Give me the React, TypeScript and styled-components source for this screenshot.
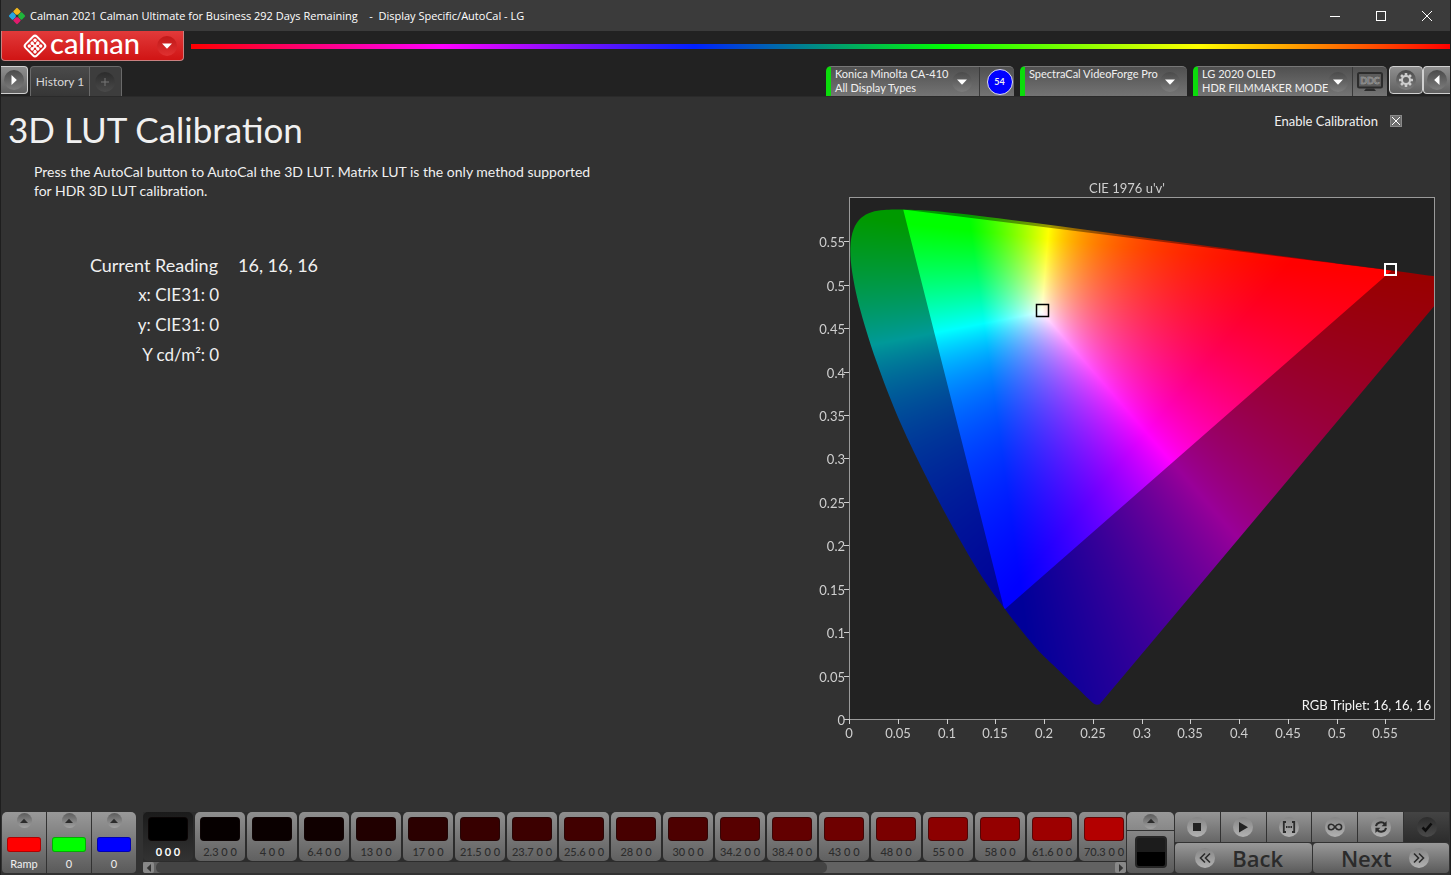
import React, { useLayoutEffect, useRef, useState } from "react";
import styled, { createGlobalStyle, css } from "styled-components";

const GlobalStyle = createGlobalStyle`
  * { box-sizing: border-box; }
  body {
    margin: 0;
    background: #323232;
    color: #f0f0f0;
    font-family: Lato, "Liberation Sans", sans-serif;
    font-size: 13px;
  }
  button {
    margin: 0;
    padding: 0;
    border: 0;
    background: none;
    color: inherit;
    font: inherit;
    cursor: pointer;
  }
  svg { display: block; }
`;

const Shell = styled.div`
  display: flex;
  flex-direction: column;
  min-height: 100vh;
  border-left: 1px solid #1e1e1e;
  border-right: 1px solid #1e1e1e;
`;

/* ---------- window title bar ---------- */

const TitleBar = styled.header`
  display: flex;
  align-items: center;
  height: 31px;
  padding-left: 7px;
  background: #3b3b3b;
  color: #fff;
  font-family: "Open Sans", "Noto Sans", sans-serif;
  font-size: 11px;
`;

const WindowTitle = styled.span`
  margin-left: 4px;
  white-space: pre;
`;

const WindowButtons = styled.div`
  display: flex;
  margin-left: auto;
`;

const WindowButton = styled.button`
  display: grid;
  place-items: center;
  width: 46px;
  height: 31px;
`;

/* ---------- brand row ---------- */

const Header = styled.div`
  background: #222;
`;

const BrandRow = styled.div`
  display: flex;
  align-items: center;
  height: 30px;
  gap: 7px;
`;

const BrandButton = styled.button`
  display: flex;
  align-items: center;
  width: 183px;
  height: 30px;
  padding: 0 6px 0 20px;
  border: 1px solid #c98080;
  border-top: 0;
  border-radius: 0 0 4px 4px;
  background: linear-gradient(#e23a3a, #d01414);
  color: #fff;
`;

const BrandName = styled.span`
  margin-left: 2px;
  font-size: 29px;
  font-weight: 500;
  line-height: 24px;
  flex: 1;
  text-align: left;
  height: 30px;
`;

const Rainbow = styled.div`
  flex: 1;
  height: 5px;
  background: linear-gradient(
    90deg,
    #f00,
    #f0f 20%,
    #0020ff 40%,
    #0f0 60%,
    #ff0 80%,
    #f00
  );
`;

/* ---------- tabs and devices ---------- */

const TabRow = styled.div`
  display: flex;
  align-items: flex-end;
  height: 36px;
  border-bottom: 1px solid #2a2a2a;
`;

type Tone = "dark" | "mid" | "light" | "red" | "dim";
const toneFill: Record<Tone, string> = {
  dark: "linear-gradient(#4a4a4a, #7c7c7c)",
  mid: "linear-gradient(#5c5c5c, #a2a2a2)",
  light: "linear-gradient(#858585, #b2b2b2)",
  red: "linear-gradient(#c01818, #e03030)",
  dim: "linear-gradient(#2c2c2c, #4a4a4a)",
};

const RoundIcon = styled.span<{ $size?: number; $tone?: Tone }>`
  display: grid;
  place-items: center;
  flex: none;
  width: ${(p) => p.$size ?? 20}px;
  height: ${(p) => p.$size ?? 20}px;
  border-radius: 50%;
  color: ${(p) => (p.$tone === "light" || p.$tone === "mid" ? "#2b2b2b" : "#fff")};
  background: ${(p) => toneFill[p.$tone ?? "dark"]};
`;

const EdgeButton = styled.button<{ $side?: "left" | "right"; $wide?: boolean }>`
  display: grid;
  place-items: center;
  width: ${(p) => (p.$wide ? 34 : 27)}px;
  height: 28px;
  border: 1px solid #d0d0d0;
  background: linear-gradient(#8f8f8f, #606060);
  border-radius: 4px;
  align-self: flex-end;
  margin-bottom: 2px;
  ${(p) =>
    p.$side === "left" &&
    css`
      border-left: 0;
      border-radius: 0 4px 4px 0;
    `}
  ${(p) =>
    p.$side === "right" &&
    css`
      border-right: 0;
      border-radius: 4px 0 0 4px;
    `}
`;

const HistoryTabs = styled.div`
  display: flex;
  height: 30px;
  margin-left: 2px;
  border: 1px solid #6a6a6a;
  border-bottom: 0;
  border-radius: 4px 4px 0 0;
  background: linear-gradient(#4a4a4a, #363636);
`;

const HistoryTab = styled.button`
  width: 58px;
  color: #d8d8d8;
  font-size: 12px;
`;

const AddTab = styled.button`
  display: grid;
  place-items: center;
  width: 32px;
  padding-right: 2px;
  border-left: 1px solid #6a6a6a;
  background: #3d3d3d;
  border-radius: 0 3px 0 0;
`;

const Devices = styled.div`
  display: flex;
  align-items: flex-end;
  gap: 6px;
  margin-left: auto;
  margin-right: 2px;
`;

const Device = styled.div`
  display: flex;
  height: 30px;
  border-top: 1px solid #777;
  border-left: 5px solid #0bdc0b;
  border-radius: 5px 5px 0 0;
  background: linear-gradient(#505050, #747474);
`;

const DevicePicker = styled.button<{ $width: number }>`
  display: flex;
  align-items: center;
  justify-content: space-between;
  width: ${(p) => p.$width}px;
  padding: 0 7px 0 4px;
  text-align: left;
  font-size: 11px;
  line-height: 14px;
  white-space: nowrap;
`;

const DeviceText = styled.span`
  align-self: flex-start;
`;

const DeviceExtra = styled.div<{ $badge?: boolean }>`
  display: grid;
  place-items: center;
  width: 35px;
  padding-left: ${(p) => (p.$badge ? 5 : 0)}px;
  border-left: 1px solid #3a3a3a;
`;

const Badge = styled.span`
  display: grid;
  place-items: center;
  width: 26px;
  height: 26px;
  border: 1px solid #dde;
  border-radius: 50%;
  background: #00f;
  font-size: 9px;
  font-weight: 700;
`;

/* ---------- page ---------- */

const Main = styled.main`
  flex: 1;
  display: grid;
  grid-template-columns: minmax(0, 1fr) minmax(0, 628px);
  padding: 0 12px 0 7px;
  background: #323232;
`;

const Title = styled.h1`
  margin: 0;
  padding-top: 10px;
  font-size: 35px;
  font-weight: 400;
  line-height: 44px;
`;

const Intro = styled.p`
  max-width: 568px;
  margin: 11px 0 0 26px;
  font-size: 14px;
  line-height: 19px;
`;

const Readings = styled.dl`
  margin: 50px 0 0;
  line-height: 30px;
`;

const Reading = styled.div<{ $joined?: boolean }>`
  display: flex;
  gap: ${(p) => (p.$joined ? 4 : 20)}px;
  font-size: ${(p) => (p.$joined ? 17 : 18)}px;
  width: ${(p) => (p.$joined ? "211px" : "auto")};
  justify-content: ${(p) => (p.$joined ? "flex-end" : "flex-start")};
  dt {
    text-align: right;
    width: ${(p) => (p.$joined ? "auto" : "210px")};
  }
  dd {
    margin: 0;
  }
`;

const ChartColumn = styled.section`
  display: flex;
  flex-direction: column;
`;

const EnableRow = styled.label`
  display: flex;
  align-items: center;
  align-self: flex-end;
  gap: 12px;
  height: 20px;
  margin: 14px 36px 0 0;
`;

const CheckBox = styled.input`
  appearance: none;
  width: 12px;
  height: 12px;
  margin: 0;
  border: 1px solid #8a8a8a;
  background: #6e6e6e;
  &:checked {
    background:
      linear-gradient(45deg, transparent 44%, #fff 44% 56%, transparent 56%) center / 8px 8px no-repeat,
      linear-gradient(-45deg, transparent 44%, #fff 44% 56%, transparent 56%) center / 8px 8px no-repeat,
      #6e6e6e;
  }
`;

const ChartStack = styled.div`
  display: grid;
  margin-top: 47px;
  > * {
    grid-area: 1 / 1;
    width: 100%;
    height: auto;
  }
`;

const AxisText = styled.text<{ $bright?: boolean }>`
  font-size: 13px;
  fill: ${(p) => (p.$bright ? "#f4f4f4" : "#cfcfcf")};
`;

/* ---------- footer ---------- */

const Footer = styled.footer`
  display: flex;
  height: 64px;
  padding: 1px 1px 2px;
`;

const panel = css`
  background: linear-gradient(#999, #5a5a5a);
`;

const RampGroup = styled.div`
  display: flex;
  gap: 1px;
  border-radius: 5px 5px 4px 4px;
  overflow: hidden;
  margin-right: 7px;
`;

const RampButton = styled.button`
  ${panel}
  display: flex;
  flex-direction: column;
  align-items: center;
  justify-content: space-between;
  width: 44px;
  padding: 1px 0 2px;
  font-size: 11px;
  line-height: 14px;
`;

const RampColor = styled.span<{ $color: string }>`
  width: 34px;
  height: 15px;
  margin-top: 7px;
  margin-bottom: 3px;
  border-radius: 3px;
  background: ${(p) => p.$color};
  box-shadow: inset 0 0 0 1px rgba(0, 0, 0, 0.3);
`;

const Patches = styled.div`
  display: flex;
  flex-direction: column;
  flex: 1;
  min-width: 0;
  background: #2c2c2c;
`;

const PatchList = styled.div`
  display: flex;
  gap: 2px;
  flex: 1;
  overflow: hidden;
`;

const Patch = styled.button<{ $selected: boolean }>`
  display: flex;
  flex-direction: column;
  align-items: center;
  flex: none;
  width: 50px;
  height: 49px;
  padding-top: 5px;
  border-radius: 5px;
  background: ${(p) =>
    p.$selected ? "linear-gradient(#1a1a1a, #333)" : "linear-gradient(#8f8f8f, #606060)"};
  color: ${(p) => (p.$selected ? "#fff" : "#2c2c2c")};
  font-size: 11px;
  font-weight: ${(p) => (p.$selected ? 700 : 500)};
  line-height: 14px;
  white-space: nowrap;
`;

const PatchColor = styled.span<{ $level: number }>`
  width: 40px;
  height: 24px;
  margin-bottom: 4px;
  border-radius: 4px;
  border: 1px solid rgba(20, 10, 10, 0.5);
  background: rgb(${(p) => Math.round(p.$level * 2.55)}, 0, 0);
`;

const ScrollBar = styled.div`
  display: flex;
  height: 11px;
  background: #626262;
  border-radius: 0 0 3px 3px;
`;

const ScrollArrow = styled.button`
  display: grid;
  place-items: center;
  width: 11px;
  height: 11px;
  background: #888;
  color: #333;
  border-radius: 2px;
`;

const ScrollTrack = styled.div`
  flex: 1;
  padding: 0 0 0 2px;
`;

const ScrollThumb = styled.div`
  width: 70%;
  height: 11px;
  border-radius: 5px;
  background: #444;
`;

const PreviewPanel = styled.div`
  display: flex;
  flex-direction: column;
  gap: 1px;
  width: 47px;
  margin: 0 1px;
  border-radius: 5px 5px 4px 4px;
  overflow: hidden;
`;

const PreviewToggle = styled.button`
  display: grid;
  place-items: center;
  height: 18px;
  background: linear-gradient(#999, #888);
`;

const PreviewSlot = styled.div`
  display: grid;
  place-items: center;
  flex: 1;
  background: linear-gradient(#868686, #5a5a5a);
`;

const PreviewColor = styled.span`
  width: 32px;
  height: 32px;
  border: 2px solid #262626;
  border-radius: 4px;
  background: linear-gradient(#1c1c1c 50%, #000 50%);
`;

const Controls = styled.div`
  display: flex;
  flex-direction: column;
  gap: 1px;
  width: 274px;
`;

const ControlRow = styled.div`
  display: flex;
  gap: 1px;
  height: 30px;
`;

const ControlButton = styled.button<{ $dim?: boolean }>`
  display: grid;
  place-items: center;
  flex: 1;
  background: ${(p) =>
    p.$dim ? "linear-gradient(#444, #2c2c2c)" : "linear-gradient(#969696, #666)"};
  &:first-child {
    border-top-left-radius: 4px;
  }
`;

const NavButton = styled.button<{ $back?: boolean }>`
  ${panel}
  display: flex;
  align-items: center;
  justify-content: center;
  gap: 17px;
  flex: 1;
  padding: ${(p) => (p.$back ? "0 8px 0 0" : "0 0 0 8px")};
  border-radius: 4px;
  color: #2b2b2b;
  font-family: "Open Sans", "Noto Sans", sans-serif;
  font-size: 22px;
  font-weight: 600;
  line-height: 30px;
`;

/* ---------- icons ---------- */

const AppIcon = () => (
  <svg width="18" height="18" viewBox="0 0 18 18" aria-hidden="true">
    <g transform="rotate(45 9 9)">
      <rect x="3" y="3" width="5.8" height="5.8" rx="1" fill="#f2b91c" />
      <rect x="9.2" y="3" width="5.8" height="5.8" rx="1" fill="#1fb53a" />
      <rect x="3" y="9.2" width="5.8" height="5.8" rx="1" fill="#27a5e0" />
      <rect x="9.2" y="9.2" width="5.8" height="5.8" rx="1" fill="#e31b6d" />
      <circle cx="9" cy="9" r="1.4" fill="#333" />
    </g>
  </svg>
);

const BrandMark = () => (
  <svg width="26" height="26" viewBox="0 0 26 26" aria-hidden="true">
    <g transform="rotate(45 13 13)" fill="#fff">
      <rect x="5" y="5" width="16" height="16" rx="2.6" fill="none" stroke="#fff" strokeWidth="2" />
      {[9, 13, 17].map((x) =>
        [9, 13, 17].map((y) => <circle key={`${x}-${y}`} cx={x} cy={y} r="1.75" />),
      )}
      <path d="M13 9v8M9 13h8" stroke="#fff" strokeWidth="1" />
    </g>
  </svg>
);

type ArrowProps = { dir: "up" | "down" | "left" | "right"; size?: number };
const arrowAngle = { down: 0, left: 90, up: 180, right: 270 };
const Arrow = ({ dir, size = 10 }: ArrowProps) => (
  <svg width={size} height={size} viewBox="0 0 10 10" aria-hidden="true">
    <path d="M0 2.5h10L5 7.8z" fill="currentColor" transform={`rotate(${arrowAngle[dir]} 5 5)`} />
  </svg>
);

const GearIcon = () => (
  <svg width="16" height="16" viewBox="0 0 16 16" aria-hidden="true">
    <g fill="#ccc">
      {[0, 45, 90, 135, 180, 225, 270, 315].map((a) => (
        <rect key={a} x="6.7" y="1" width="2.6" height="3.4" rx=".6" transform={`rotate(${a} 8 8)`} />
      ))}
    </g>
    <circle cx="8" cy="8" r="4" fill="none" stroke="#ccc" strokeWidth="2" />
  </svg>
);

const DdcIcon = () => (
  <svg width="26" height="20" viewBox="0 0 26 20" role="img" aria-label="DDC">
    <rect x="1" y="1" width="24" height="14.5" rx="1.5" fill="#5c5c5c" stroke="#2c2c2c" strokeWidth="2" />
    <path d="M9 16.5h8l2 2.500H7z" fill="#2c2c2c" />
    <text
      x="13"
      y="11.5"
      textAnchor="middle"
      fontSize="9"
      fontWeight="700"
      fill="#666"
      stroke="#a8a8a8"
      strokeWidth=".5"
    >
      DDC
    </text>
  </svg>
);

const icon = { width: 16, height: 16, viewBox: "0 0 16 16", "aria-hidden": true } as const;
const line = {
  fill: "none",
  stroke: "#2b2b2b",
  strokeWidth: 1.6,
} as const;

const StopIcon = () => (
  <svg {...icon}><rect x="4" y="4" width="8" height="8" fill="#222" /></svg>
);
const PlayIcon = () => (
  <svg {...icon}><path d="M4 3l9 5.3-9 5.200z" fill="#222" /></svg>
);
const RangeIcon = () => (
  <svg {...icon}>
    <path d="M5 3H2.800v10H5M11 3h2.200v10H11" {...line} strokeWidth={1.8} />
    <path d="M5 8h1.500M7.250 8h1.500M9.500 8H11" {...line} strokeWidth={1.8} />
  </svg>
);
const LoopIcon = () => (
  <svg {...icon}>
    <path
      d="M8 8C6.500 5.800 5.400 5.200 4.200 5.200a2.800 2.800 0 0 0 0 5.600C5.400 10.800 6.500 10.200 8 8s2.600-2.800 3.800-2.800a2.800 2.800 0 0 1 0 5.600C10.600 10.800 9.500 10.200 8 8z"
      {...line}
    />
  </svg>
);
const RefreshIcon = () => (
  <svg {...icon}>
    <path d="M3 7.200A5 4.600 0 0 1 11.800 5M13 8.800A5 4.600 0 0 1 4.200 11" {...line} strokeWidth={2} />
    <path d="M13.600 2v5.200H8.600zM2.400 14V8.800h5z" fill="#2b2b2b" />
  </svg>
);
const CheckIcon = () => (
  <svg {...icon}><path d="M3.500 8.500l3 3 6-7" {...line} stroke="#0d0d0d" strokeWidth={2.6} /></svg>
);
const DoubleChevron = ({ back }: { back?: boolean }) => (
  <svg {...icon}>
    <path
      d="M3 3.500L7.500 8 3 12.500M8 3.500L12.500 8 8 12.500"
      {...line}
      transform={back ? "rotate(180 8 8)" : undefined}
    />
  </svg>
);

/* ---------- CIE 1976 u'v' chart ---------- */

const CHART = { width: 628, height: 566 };
const PLOT = { left: 39, top: 20, width: 585, height: 521, max: 0.6 };

const toX = (u: number) => PLOT.left + (u / PLOT.max) * PLOT.width;
const toY = (v: number) => PLOT.top + PLOT.height - (v / PLOT.max) * PLOT.height;

// CIE 1931 2-degree spectral locus as x, y pairs from 380 to 700 nm
const LOCUS_XY: [number, number][] = [
  [0.1741, 0.005], [0.1714, 0.0051], [0.1689, 0.0069], [0.1644, 0.0109], [0.1566, 0.0177],
  [0.144, 0.0297], [0.1241, 0.0578], [0.1096, 0.0868], [0.0913, 0.1327], [0.0687, 0.2007],
  [0.0454, 0.295], [0.0235, 0.4127], [0.0082, 0.5384], [0.0039, 0.6548], [0.0139, 0.7502],
  [0.0389, 0.812], [0.0743, 0.8338], [0.1142, 0.8262], [0.1547, 0.8059], [0.2296, 0.7543],
  [0.3016, 0.6923], [0.3731, 0.6245], [0.4441, 0.5547], [0.5125, 0.4866], [0.5752, 0.4242],
  [0.627, 0.3725], [0.6658, 0.334], [0.6915, 0.3083], [0.719, 0.2809], [0.7347, 0.2653],
];

const locus = LOCUS_XY.map(([x, y]) => {
  const d = -2 * x + 12 * y + 3;
  return [toX((4 * x) / d), toY((9 * y) / d)];
});

// BT.2020 primaries
const GAMUT = [
  [0.5566, 0.5165],
  [0.0556, 0.5868],
  [0.1593, 0.1258],
].map(([u, v]) => [toX(u), toY(v)]);

function colorAt(u: number, v: number): [number, number, number] {
  const d = 6 * u - 16 * v + 12;
  const x = (9 * u) / d;
  const y = Math.max((4 * v) / d, 0.0001);
  const X = x / y;
  const Z = (1 - x - y) / y;
  const r = Math.max(0, 3.2406 * X - 1.5372 - 0.4986 * Z);
  const g = Math.max(0, -0.9689 * X + 1.8758 + 0.0415 * Z);
  const b = Math.max(0, 0.0557 * X - 0.204 + 1.057 * Z);
  const m = Math.max(r, g, b) || 1;
  return [(r / m) * 255, (g / m) * 255, (b / m) * 255];
}

function drawGamut(ctx: CanvasRenderingContext2D) {
  const { width, height } = CHART;
  const image = ctx.createImageData(width, height);
  for (let py = PLOT.top; py < PLOT.top + PLOT.height; py++) {
    for (let px = PLOT.left; px < PLOT.left + PLOT.width; px++) {
      const u = ((px + 0.5 - PLOT.left) / PLOT.width) * PLOT.max;
      const v = ((PLOT.top + PLOT.height - py - 0.5) / PLOT.height) * PLOT.max;
      const i = (py * width + px) * 4;
      const [r, g, b] = colorAt(u, v);
      image.data[i] = r;
      image.data[i + 1] = g;
      image.data[i + 2] = b;
      image.data[i + 3] = 255;
    }
  }
  ctx.putImageData(image, 0, 0);

  // keep only what lies inside the spectral locus
  ctx.globalCompositeOperation = "destination-in";
  ctx.beginPath();
  ctx.moveTo(locus[0][0], locus[0][1]);
  for (let i = 0; i < locus.length - 1; i++) {
    const p0 = locus[Math.max(i - 1, 0)];
    const p1 = locus[i];
    const p2 = locus[i + 1];
    const p3 = locus[Math.min(i + 2, locus.length - 1)];
    ctx.bezierCurveTo(
      p1[0] + (p2[0] - p0[0]) / 6,
      p1[1] + (p2[1] - p0[1]) / 6,
      p2[0] - (p3[0] - p1[0]) / 6,
      p2[1] - (p3[1] - p1[1]) / 6,
      p2[0],
      p2[1],
    );
  }
  ctx.closePath();
  ctx.fill();

  // darken the area outside the gamut triangle
  ctx.globalCompositeOperation = "source-atop";
  ctx.fillStyle = "rgba(0, 0, 0, 0.4)";
  ctx.beginPath();
  ctx.rect(0, 0, width, height);
  GAMUT.forEach(([x, y], i) => (i ? ctx.lineTo(x, y) : ctx.moveTo(x, y)));
  ctx.closePath();
  ctx.fill("evenodd");

  ctx.globalCompositeOperation = "destination-over";
  ctx.fillStyle = "#222";
  ctx.fillRect(PLOT.left, PLOT.top, PLOT.width, PLOT.height);
  ctx.globalCompositeOperation = "source-over";
}

const ticks = Array.from({ length: 12 }, (_, i) => i * 0.05);
const label = (t: number) => String(Number(t.toFixed(2)));

function CieChart() {
  const ref = useRef<HTMLCanvasElement>(null);
  useLayoutEffect(() => {
    const ctx = ref.current?.getContext("2d");
    if (ctx) drawGamut(ctx);
  }, []);
  return (
    <ChartStack>
      <canvas ref={ref} width={CHART.width} height={CHART.height} />
      <svg viewBox={`0 0 ${CHART.width} ${CHART.height}`} role="img" aria-label="CIE 1976 chart">
        <AxisText x="317" y="15" textAnchor="middle">CIE 1976 u'v'</AxisText>
        <rect
          x={PLOT.left + 0.5}
          y={PLOT.top - 0.5}
          width={PLOT.width}
          height={PLOT.height + 1}
          fill="none"
          stroke="#9a9a9a"
        />
        {ticks.map((t) => (
          <g key={t}>
            <path
              d={`M${PLOT.left - 5} ${Math.round(toY(t)) + 0.5}h5M${Math.round(toX(t)) + 0.5} ${PLOT.top + PLOT.height}v5`}
              stroke="#cfcfcf"
            />
            <AxisText x={PLOT.left - 4} y={Math.round(toY(t)) + 6} textAnchor="end">{label(t)}</AxisText>
            <AxisText x={Math.round(toX(t))} y={CHART.height - 6} textAnchor="middle">{label(t)}</AxisText>
          </g>
        ))}
        <rect x="226.500" y="126.500" width="12" height="12" fill="none" stroke="#000" strokeWidth="1.500" />
        <rect x="575" y="86" width="11" height="11" fill="none" stroke="#fff" strokeWidth="2" />
        <AxisText x="621" y="532" textAnchor="end" $bright>RGB Triplet: 16, 16, 16</AxisText>
      </svg>
    </ChartStack>
  );
}

/* ---------- app ---------- */

const RAMPS = [
  { name: "Ramp", color: "#f00" },
  { name: "0", color: "#0f0" },
  { name: "0", color: "#00f" },
];

const LEVELS = [
  0, 2.3, 4, 6.4, 13, 17, 21.5, 23.7, 25.6, 28, 30, 34.2, 38.4, 43, 48, 55, 58, 61.6, 70.3,
];

export default function App() {
  const [enabled, setEnabled] = useState(true);
  const [selected, setSelected] = useState(0);
  return (
    <Shell>
      <GlobalStyle />
      <TitleBar>
        <AppIcon />
        <WindowTitle>
          {"Calman 2021 Calman Ultimate for Business 292 Days Remaining    -  Display Specific/AutoCal - LG"}
        </WindowTitle>
        <WindowButtons>
          <WindowButton aria-label="Minimize">
            <svg width="10" height="10" aria-hidden="true"><path d="M0 5.500h10" stroke="#fff" /></svg>
          </WindowButton>
          <WindowButton aria-label="Maximize">
            <svg width="10" height="10" aria-hidden="true">
              <rect x=".5" y=".5" width="9" height="9" fill="none" stroke="#fff" />
            </svg>
          </WindowButton>
          <WindowButton aria-label="Close">
            <svg width="10" height="10" aria-hidden="true"><path d="M0 0l10 10M10 0L0 10" stroke="#fff" /></svg>
          </WindowButton>
        </WindowButtons>
      </TitleBar>

      <Header>
        <BrandRow>
          <BrandButton aria-haspopup="menu">
            <BrandMark />
            <BrandName>calman</BrandName>
            <RoundIcon $tone="red"><Arrow dir="down" /></RoundIcon>
          </BrandButton>
          <Rainbow />
        </BrandRow>
        <TabRow>
          <EdgeButton $side="left" aria-label="Show panel">
            <RoundIcon><Arrow dir="right" /></RoundIcon>
          </EdgeButton>
          <HistoryTabs>
            <HistoryTab>History 1</HistoryTab>
            <AddTab aria-label="Add tab">
              <RoundIcon $tone="dim">
                <svg width="8" height="8" aria-hidden="true"><path d="M4 0v8M0 4h8" stroke="#777" /></svg>
              </RoundIcon>
            </AddTab>
          </HistoryTabs>
          <Devices>
            <Device>
              <DevicePicker $width={148} aria-haspopup="listbox">
                <DeviceText>Konica Minolta CA-410<br />All Display Types</DeviceText>
                <RoundIcon><Arrow dir="down" /></RoundIcon>
              </DevicePicker>
              <DeviceExtra $badge><Badge>54</Badge></DeviceExtra>
            </Device>
            <Device>
              <DevicePicker $width={162} aria-haspopup="listbox">
                <DeviceText>SpectraCal VideoForge Pro</DeviceText>
                <RoundIcon><Arrow dir="down" /></RoundIcon>
              </DevicePicker>
            </Device>
            <Device>
              <DevicePicker $width={154} aria-haspopup="listbox">
                <DeviceText>LG 2020 OLED<br />HDR FILMMAKER MODE</DeviceText>
                <RoundIcon><Arrow dir="down" /></RoundIcon>
              </DevicePicker>
              <DeviceExtra><DdcIcon /></DeviceExtra>
            </Device>
          </Devices>
          <EdgeButton $wide aria-label="Settings"><RoundIcon><GearIcon /></RoundIcon></EdgeButton>
          <EdgeButton $side="right" aria-label="Collapse">
            <RoundIcon><Arrow dir="left" /></RoundIcon>
          </EdgeButton>
        </TabRow>
      </Header>

      <Main>
        <section>
          <Title>3D LUT Calibration</Title>
          <Intro>
            Press the AutoCal button to AutoCal the 3D LUT. Matrix LUT is the only method supported for
            HDR 3D LUT calibration.
          </Intro>
          <Readings>
            <Reading><dt>Current Reading</dt><dd>16, 16, 16</dd></Reading>
            <Reading $joined><dt>x: CIE31:</dt><dd>0</dd></Reading>
            <Reading $joined><dt>y: CIE31:</dt><dd>0</dd></Reading>
            <Reading $joined><dt>Y cd/m²:</dt><dd>0</dd></Reading>
          </Readings>
        </section>
        <ChartColumn>
          <EnableRow>
            Enable Calibration
            <CheckBox type="checkbox" checked={enabled} onChange={(e) => setEnabled(e.target.checked)} />
          </EnableRow>
          <CieChart />
        </ChartColumn>
      </Main>

      <Footer>
        <RampGroup>
          {RAMPS.map((r) => (
            <RampButton key={r.color}>
              <RoundIcon $size={15} $tone="mid"><Arrow dir="up" size={8} /></RoundIcon>
              <RampColor $color={r.color} />
              {r.name}
            </RampButton>
          ))}
        </RampGroup>
        <Patches>
          <PatchList>
            {LEVELS.map((level, i) => (
              <Patch key={level} $selected={i === selected} onClick={() => setSelected(i)}>
                <PatchColor $level={level} />
                {level} 0 0
              </Patch>
            ))}
          </PatchList>
          <ScrollBar>
            <ScrollArrow aria-label="Scroll left"><Arrow dir="left" size={8} /></ScrollArrow>
            <ScrollTrack><ScrollThumb /></ScrollTrack>
            <ScrollArrow aria-label="Scroll right"><Arrow dir="right" size={8} /></ScrollArrow>
          </ScrollBar>
        </Patches>
        <PreviewPanel>
          <PreviewToggle aria-label="Expand">
            <RoundIcon $size={15} $tone="mid"><Arrow dir="up" size={8} /></RoundIcon>
          </PreviewToggle>
          <PreviewSlot><PreviewColor /></PreviewSlot>
        </PreviewPanel>
        <Controls>
          <ControlRow>
            <ControlButton aria-label="Stop"><RoundIcon $tone="light"><StopIcon /></RoundIcon></ControlButton>
            <ControlButton aria-label="Read"><RoundIcon $tone="light"><PlayIcon /></RoundIcon></ControlButton>
            <ControlButton aria-label="Read series"><RoundIcon $tone="light"><RangeIcon /></RoundIcon></ControlButton>
            <ControlButton aria-label="Read continuously"><RoundIcon $tone="light"><LoopIcon /></RoundIcon></ControlButton>
            <ControlButton aria-label="Refresh"><RoundIcon $tone="light"><RefreshIcon /></RoundIcon></ControlButton>
            <ControlButton aria-label="Accept" $dim><RoundIcon $tone="dim"><CheckIcon /></RoundIcon></ControlButton>
          </ControlRow>
          <ControlRow>
            <NavButton $back><RoundIcon $tone="light"><DoubleChevron back /></RoundIcon>Back</NavButton>
            <NavButton>Next<RoundIcon $tone="light"><DoubleChevron /></RoundIcon></NavButton>
          </ControlRow>
        </Controls>
      </Footer>
    </Shell>
  );
}
